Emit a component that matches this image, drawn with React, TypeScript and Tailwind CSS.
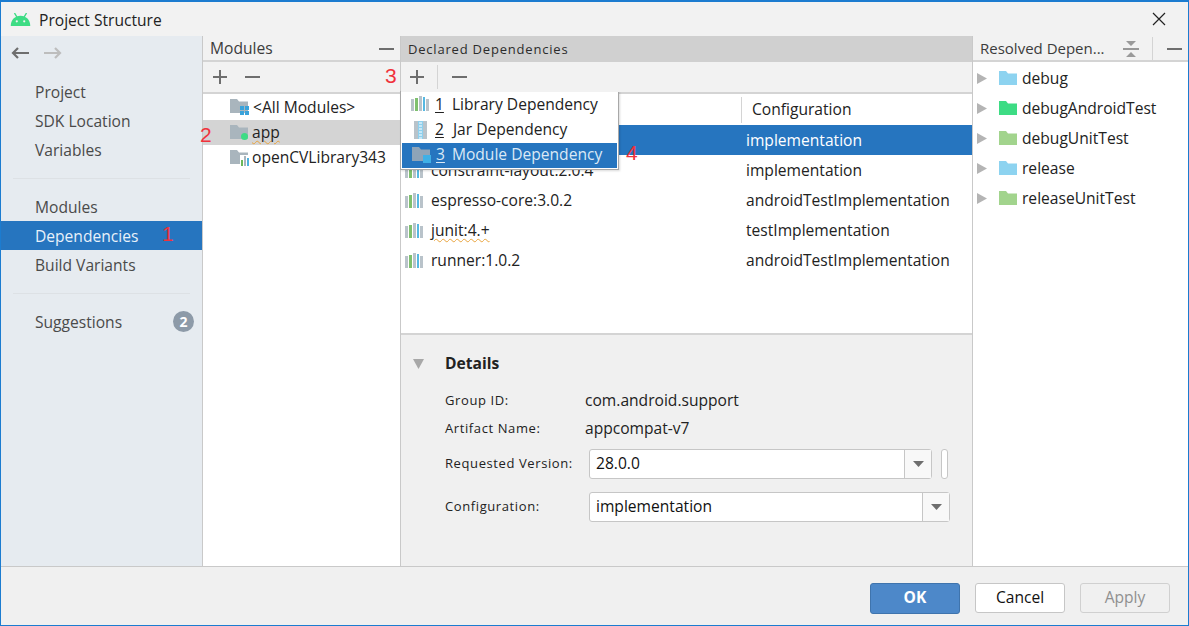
import { ReactNode } from "react";

const FONT = "font-['Open_Sans','Noto_Sans',sans-serif]";

function Folder({ color, className = "" }: { color: string; className?: string }) {
  return (
    <svg width="18" height="14" viewBox="0 0 18 14" className={className}>
      <path d="M0 0H7L9 2.5H18V14H0Z" fill={color} />
    </svg>
  );
}

function Bars({ className = "" }: { className?: string }) {
  return (
    <svg width="18" height="15" viewBox="0 0 18 15" className={`shrink-0 ${className}`}>
      <rect x="0" y="3" width="3" height="12" fill="#b9c3ca" />
      <rect x="4" y="2" width="3" height="13" fill="#7fc06f" />
      <rect x="8" y="0" width="3" height="15" fill="#b9c3ca" />
      <rect x="12" y="1" width="2" height="14" fill="#55b8e2" />
      <rect x="15" y="3" width="3" height="12" fill="#b9c3ca" />
    </svg>
  );
}

function ModuleIcon({ badge }: { badge: "grid" | "dot" | "bars" }) {
  return (
    <div className="relative h-[16px] w-[19px] shrink-0">
      <Folder color="#a9b5bd" />
      {badge === "grid" && (
        <div className="absolute bottom-0 right-0 grid h-[9px] w-[9px] grid-cols-2 gap-px">
          <span className="bg-[#3aa3db]" />
          <span className="bg-[#3aa3db]" />
          <span className="bg-[#3aa3db]" />
          <span className="bg-[#3aa3db]" />
        </div>
      )}
      {badge === "dot" && (
        <span className="absolute bottom-[1px] right-[1px] h-[7px] w-[7px] rounded-full bg-[#3ddc84]" />
      )}
      {badge === "bars" && (
        <div className="absolute bottom-0 right-0 flex h-[11px] items-end gap-px bg-white pl-px">
          <span className="h-[6px] w-[2px] bg-[#6cb85a]" />
          <span className="h-[10px] w-[2px] bg-[#a9b5bd]" />
          <span className="h-[8px] w-[2px] bg-[#4fb3e0]" />
        </div>
      )}
    </div>
  );
}

function Minus() {
  return <span className="block h-[2px] w-[15px] bg-[#6e6e6e]" />;
}

function Plus() {
  return (
    <svg width="14" height="14" viewBox="0 0 14 14">
      <path d="M6 0h2v6h6v2H8v6H6V8H0V6h6Z" fill="#6e6e6e" />
    </svg>
  );
}

function Squiggle({ children }: { children: ReactNode }) {
  return (
    <span className="underline decoration-[#e8a33d] decoration-wavy decoration-1 underline-offset-2">
      {children}
    </span>
  );
}

function Mark({ className, children }: { className: string; children: ReactNode }) {
  return (
    <span className={`absolute font-['Liberation_Sans',sans-serif] text-[21px] leading-none text-[#f0323c] ${className}`}>
      {children}
    </span>
  );
}

function NavItem({ label, active }: { label: string; active?: boolean }) {
  return (
    <div
      className={`flex h-[29px] items-center pl-[34px] pt-[2px] ${active ? "bg-[#2675bf] text-[#e8f1fa]" : "text-[#4a4a4a]"}`}
    >
      {label}
    </div>
  );
}

function NavDivider() {
  return <div className="mx-[12px] mb-[13px] mt-[14px] h-px bg-[#dde1e5]" />;
}

function Sidebar() {
  return (
    <aside className="flex w-[202px] shrink-0 flex-col border-r border-[#c9c9c9] bg-[#e6ebf0]">
      <div className="flex h-[40px] items-center gap-[15px] pb-[7px] pl-[10px]">
        <svg width="18" height="14" viewBox="0 0 18 14" fill="none" strokeWidth="2.2">
          <path d="M18 7H2M7 2 2 7l5 5" stroke="#6e6e6e" />
        </svg>
        <svg width="18" height="14" viewBox="0 0 18 14" fill="none" strokeWidth="2.2">
          <path d="M0 7h16M11 2l5 5-5 5" stroke="#bdbdbd" />
        </svg>
      </div>
      <div className="mt-[1px]">
        <NavItem label="Project" />
        <NavItem label="SDK Location" />
        <NavItem label="Variables" />
      </div>
      <NavDivider />
      <NavItem label="Modules" />
      <NavItem label="Dependencies" active />
      <NavItem label="Build Variants" />
      <NavDivider />
      <div className="flex h-[29px] items-center justify-between pl-[34px] pr-[8px] text-[#4a4a4a]">
        <span className="pt-[2px]">Suggestions</span>
        <span className="flex h-[21px] w-[21px] items-center justify-center rounded-full bg-[#8d9aa8] text-[14px] font-bold text-white">
          2
        </span>
      </div>
    </aside>
  );
}

function ModulesPanel() {
  return (
    <section className="flex w-[198px] shrink-0 flex-col border-r border-[#c9c9c9] bg-white">
      <div className="flex h-[26px] items-center justify-between border-b-2 border-[#d4d4d4] bg-[#f2f2f2] pl-[7px] pr-[6px] pt-[1px] text-[#3c3c3c]">
        Modules
        <Minus />
      </div>
      <div className="flex h-[32px] items-center gap-[18px] border-b-2 border-[#d4d4d4] bg-[#f2f2f2] pl-[10px]">
        <Plus />
        <Minus />
      </div>
      <div className="text-[#222]">
        <div className="flex h-[26px] items-center gap-[4px] pl-[27px]">
          <ModuleIcon badge="grid" />
          <span className="pt-[2px]">&lt;All Modules&gt;</span>
        </div>
        <div className="flex h-[25px] items-center gap-[3px] bg-[#d4d4d4] pl-[27px]">
          <ModuleIcon badge="dot" />
          <Squiggle>app</Squiggle>
        </div>
        <div className="flex h-[25px] items-center gap-[3px] pl-[27px]">
          <ModuleIcon badge="bars" />
          openCVLibrary343
        </div>
      </div>
    </section>
  );
}

const DEPENDENCIES = [
  { name: "appcompat-v7:28.0.0", config: "implementation", selected: true },
  { name: "constraint-layout:2.0.4", config: "implementation" },
  { name: "espresso-core:3.0.2", config: "androidTestImplementation" },
  { name: "junit:4.+", config: "testImplementation", squiggle: true },
  { name: "runner:1.0.2", config: "androidTestImplementation" },
];

function Combo({ value, width }: { value: string; width: string }) {
  return (
    <div className={`flex h-[30px] items-center rounded-[3px] border border-[#c6c6c6] bg-white ${width}`}>
      <span className="flex-1 pl-[6px] text-[#111]">{value}</span>
      <span className="flex h-full w-[27px] items-center justify-center border-l border-[#c6c6c6] bg-[#f8f8f8]">
        <svg width="11" height="6" viewBox="0 0 11 6">
          <path d="M0 0h11L5.5 6Z" fill="#6e6e6e" />
        </svg>
      </span>
    </div>
  );
}

function Details() {
  return (
    <div className="flex-1 bg-[#f0f0f0] pl-[12px] text-[#222]">
      <div className="flex h-[52px] items-center pt-[5px]">
        <svg width="11" height="10" viewBox="0 0 11 10">
          <path d="M0 0h11L5.5 10Z" fill="#a8a8a8" />
        </svg>
        <span className="ml-[21px] font-bold">Details</span>
      </div>
      <div className="pl-[32px]">
        <div className="flex h-[28px] items-center">
          <span className="w-[140px] text-[13px] tracking-[0.6px]">Group ID:</span>
          com.android.support
        </div>
        <div className="flex h-[28px] items-center">
          <span className="w-[140px] text-[13px] tracking-[0.6px]">Artifact Name:</span>
          appcompat-v7
        </div>
        <div className="mt-[6px] flex h-[30px] items-center">
          <span className="w-[144px] text-[13px] tracking-[0.6px]">Requested Version:</span>
          <Combo value="28.0.0" width="w-[343px]" />
          <span className="ml-[9px] h-[30px] w-[7px] rounded-[3px] border border-[#c6c6c6] bg-white" />
        </div>
        <div className="mt-[13px] flex h-[30px] items-center">
          <span className="w-[144px] text-[13px] tracking-[0.6px]">Configuration:</span>
          <Combo value="implementation" width="w-[361px]" />
        </div>
      </div>
    </div>
  );
}

function Popup() {
  return (
    <div className="absolute left-[-1px] top-[55px] z-10 w-[219px] border border-[#a8a8a8] bg-white p-px text-[#222] shadow-[1px_1px_2px_rgba(0,0,0,0.15)]">
      <div className="flex h-[25px] items-center pb-[2px] pl-[9px]">
        <Bars className="-mt-[2px]" />
        <span className="ml-[6px] underline underline-offset-2">1</span>
        <span className="ml-[8px]">Library Dependency</span>
      </div>
      <div className="flex h-[25px] items-center pb-[2px] pl-[12px]">
        <svg width="13" height="18" viewBox="0 0 13 18" className="shrink-0">
          <rect width="13" height="18" fill="#b9c3ca" />
          <rect x="4" width="5" height="18" fill="#8ed0ee" />
          <path d="M5 2h3M5 5h3M5 8h3M5 11h3M5 14h3M5 17h3" stroke="#fff" strokeWidth="1" />
        </svg>
        <span className="ml-[8px] underline underline-offset-2">2</span>
        <span className="ml-[9px]">Jar Dependency</span>
      </div>
      <div className="flex h-[25px] items-center bg-[#2675bf] pb-[2px] pl-[10px] text-[#dbe9f6]">
        <div className="relative h-[15px] w-[19px] shrink-0">
          <Folder color="#8ea4b8" />
          <span className="absolute bottom-[-1px] right-0 h-[8px] w-[8px] bg-[#3fb0e6]" />
        </div>
        <span className="ml-[5px] underline underline-offset-2">3</span>
        <span className="ml-[7px]">Module Dependency</span>
      </div>
    </div>
  );
}

function DependenciesPanel() {
  return (
    <section className="relative flex w-[572px] shrink-0 flex-col border-r border-[#c9c9c9]">
      <div className="flex h-[26px] items-center bg-[#d0d0d0] pl-[7px] pt-[2px] text-[13px] tracking-[0.8px] text-[#2c2c2c]">
        Declared Dependencies
      </div>
      <div className="relative z-20 flex h-[30px] items-center bg-[#f2f2f2] pl-[9px]">
        <Plus />
        <span className="ml-[13px] h-[24px] w-px bg-[#d4d4d4]" />
        <span className="ml-[14px]">
          <Minus />
        </span>
      </div>
      <div className="relative flex h-[243px] flex-col border-y-2 border-[#d4d4d4] bg-white text-[#222]">
        <div className="flex h-[31px] items-center">
          <span className="w-[340px]" />
          <span className="h-[26px] w-px bg-[#d4d4d4]" />
          <span className="pl-[10px]">Configuration</span>
        </div>
        {DEPENDENCIES.map((dep) => (
          <div
            key={dep.name}
            className={`flex h-[30px] items-center pl-[4px] ${dep.selected ? "bg-[#2675bf] text-white" : ""}`}
          >
            <Bars />
            <span className="ml-[8px] w-[315px] pt-[2px]">
              {dep.squiggle ? <Squiggle>{dep.name}</Squiggle> : dep.name}
            </span>
            <span className="pt-[2px]">{dep.config}</span>
          </div>
        ))}
      </div>
      <Details />
      <Popup />
    </section>
  );
}

const RESOLVED = [
  { name: "debug", color: "#8dd3f0" },
  { name: "debugAndroidTest", color: "#3ddc84" },
  { name: "debugUnitTest", color: "#a2d48d" },
  { name: "release", color: "#8dd3f0" },
  { name: "releaseUnitTest", color: "#a2d48d" },
];

function ResolvedPanel() {
  return (
    <section className="flex min-w-0 flex-1 flex-col bg-white">
      <div className="flex h-[26px] items-center border-b-2 border-[#d4d4d4] bg-[#f2f2f2] pl-[7px] pt-[1px] text-[#3c3c3c]">
        <span className="w-[132px] shrink-0 whitespace-nowrap text-[15px]">Resolved Depen...</span>
        <svg width="16" height="16" viewBox="0 0 16 16" className="ml-[11px] shrink-0">
          <path d="M3 0h10L8 5ZM3 16h10L8 11Z" fill="#9a9a9a" />
          <path d="M0 8h16" stroke="#7a7a7a" strokeWidth="1.5" />
        </svg>
        <span className="ml-[13px] h-[24px] w-px shrink-0 bg-[#d4d4d4]" />
        <span className="ml-[14px]">
          <Minus />
        </span>
      </div>
      <div className="pt-[1px] text-[#222]">
        {RESOLVED.map((item) => (
          <div key={item.name} className="flex h-[30px] items-center pl-[4px]">
            <svg width="10" height="11" viewBox="0 0 10 11">
              <path d="M0 0 10 5.500 0 11Z" fill="#b4b4b4" />
            </svg>
            <Folder color={item.color} className="ml-[12px]" />
            <span className="ml-[5px] pt-[2px]">{item.name}</span>
          </div>
        ))}
      </div>
    </section>
  );
}

export default function App() {
  return (
    <div
      className={`relative flex h-[626px] w-[1189px] flex-col overflow-hidden border border-t-2 border-[#1c7cd0] bg-[#f0f0f0] text-[15.6px] ${FONT}`}
    >
      <header className="flex h-[34px] shrink-0 items-center bg-[#f2f2f2] pl-[9px] pr-[22px]">
        <svg width="21" height="13" viewBox="0 0 21 14">
          <path d="M0 14C0 7.500 4.500 3 10.500 3S21 7.500 21 14Z" fill="#3ddc84" />
          <path d="M4 0 7 5M17 0 14 5" stroke="#3ddc84" strokeWidth="1.5" />
          <circle cx="6.500" cy="9" r="1.200" fill="#f2f2f2" />
          <circle cx="14.500" cy="9" r="1.200" fill="#f2f2f2" />
        </svg>
        <span className="ml-[8px] pt-[3px] text-[#222]">Project Structure</span>
        <svg width="14" height="14" viewBox="0 0 14 14" className="ml-auto" stroke="#222" strokeWidth="1.2">
          <path d="M1 1l12 12M13 1 1 13" />
        </svg>
      </header>
      <main className="relative flex min-h-0 flex-1">
        <Sidebar />
        <ModulesPanel />
        <DependenciesPanel />
        <ResolvedPanel />
        <Mark className="left-[161px] top-[187px]">1</Mark>
        <Mark className="left-[199px] top-[88px]">2</Mark>
        <Mark className="left-[384px] top-[29px]">3</Mark>
        <Mark className="left-[625px] top-[106px]">4</Mark>
      </main>
      <footer className="flex h-[59px] shrink-0 items-center justify-end gap-[15px] border-t border-[#c9c9c9] pr-[18px] pt-[4px]">
        <button className="h-[31px] w-[90px] rounded-[3px] border border-[#3f74ad] bg-[#4d88c9] font-bold text-white">
          OK
        </button>
        <button className="h-[30px] w-[90px] rounded-[3px] border border-[#c6c6c6] bg-white text-[#111]">
          Cancel
        </button>
        <button className="h-[30px] w-[90px] rounded-[3px] border border-[#d0d0d0] bg-[#f0f0f0] text-[#8f8f8f]">
          Apply
        </button>
      </footer>
    </div>
  );
}
